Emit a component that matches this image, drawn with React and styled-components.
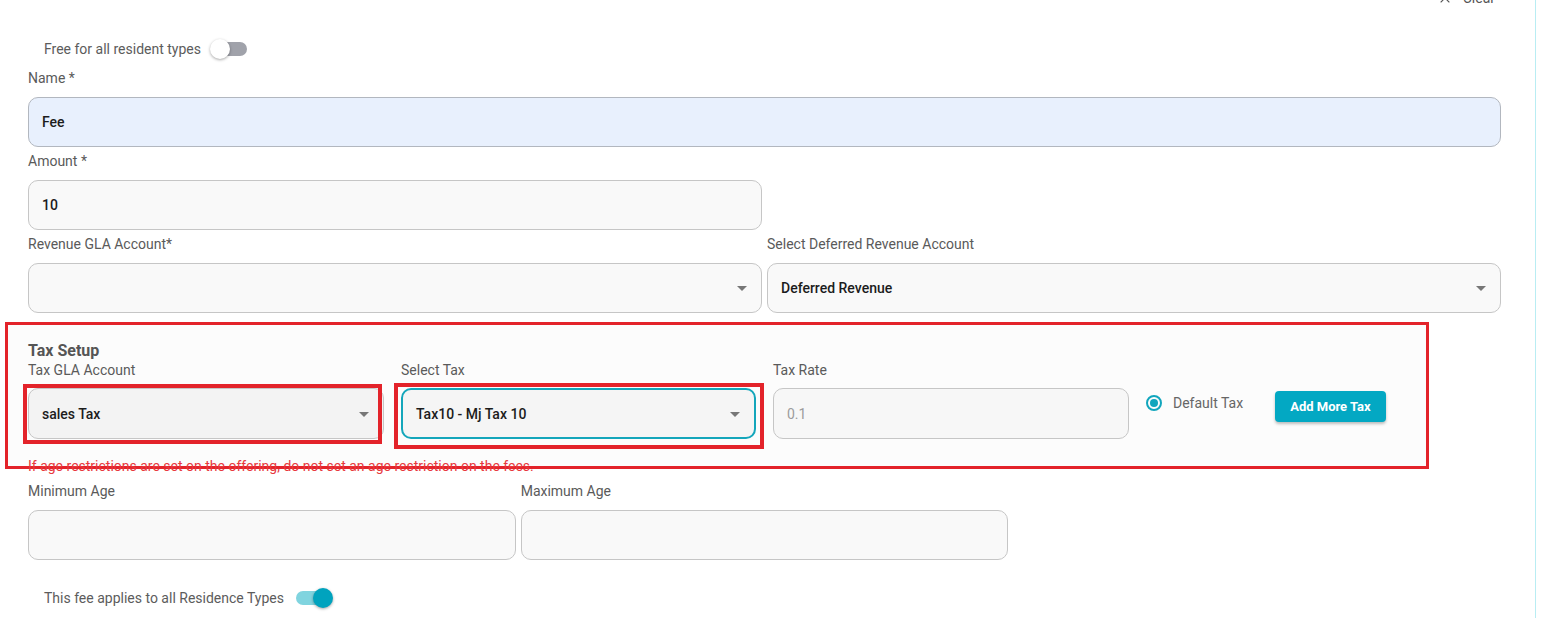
import React from "react";
import styled, { createGlobalStyle } from "styled-components";
import { X } from "lucide-react";

const GlobalStyle = createGlobalStyle`
  body {
    margin: 0;
    background: #fff;
    font-family: Roboto, "Liberation Sans", sans-serif;
    overflow: hidden;
  }
`;

const Panel = styled.div`
  width: 1536px;
  height: 630px;
  box-sizing: border-box;
  padding: 0 34px 0 28px;
  border-right: 1px solid #b9edf3;
`;

const TopBar = styled.div`
  height: 20px;
  margin: -12px 6px 0 0;
  display: flex;
  justify-content: flex-end;
  align-items: center;
`;

const ClearButton = styled.button`
  display: flex;
  align-items: center;
  gap: 10px;
  border: none;
  background: none;
  padding: 0;
  font-family: inherit;
  font-size: 14px;
  color: #555;
`;

const SwitchRow = styled.div`
  display: flex;
  align-items: center;
  height: 22px;
  padding-left: 16px;
  margin-top: ${p => p.$top || 0}px;
  margin-bottom: ${p => p.$bottom || 0}px;
  font-size: 14px;
  color: #5c5c5c;
`;

const Track = styled.span`
  position: relative;
  display: inline-block;
  width: 34px;
  height: 14px;
  border-radius: 7px;
  margin-left: ${p => p.$gap}px;
  background: ${p => (p.$on ? "#80d4df" : "#a0a2aa")};
`;

const Thumb = styled.span`
  position: absolute;
  top: -3px;
  left: ${p => (p.$on ? "17px" : "-3px")};
  width: 20px;
  height: 20px;
  border-radius: 50%;
  background: ${p => (p.$on ? "#00a3be" : "#fff")};
  box-shadow: 0 1px 3px rgba(0, 0, 0, 0.35);
`;

const Switch = ({ on, gap }) => (
  <Track $on={on} $gap={gap}>
    <Thumb $on={on} />
  </Track>
);

const Grid = styled.div`
  display: grid;
  grid-template-columns: repeat(${p => p.$cols}, 1fr);
  column-gap: 5px;
`;

const Field = styled.div`
  position: relative;
  display: flex;
  flex-direction: column;
  margin-bottom: 6px;
  width: ${p => (p.$w ? `${p.$w}px` : "auto")};
`;

const Label = styled.div`
  font-size: 14px;
  line-height: 16px;
  color: #5a5a5a;
  margin-bottom: ${p => p.$mb || 11}px;
`;

const Box = styled.div`
  position: relative;
  height: ${p => p.$h || 50}px;
  box-sizing: border-box;
  display: flex;
  align-items: center;
  padding: 0 13px;
  border-radius: 10px;
  border: ${p => (p.$focus ? "2px solid #14a6bb" : `1px solid ${p.$line || "#c6c6c6"}`)};
  background: ${p => p.$bg || "#f9f9f9"};
  font-size: 14px;
  font-weight: 500;
  color: ${p => (p.$muted ? "#9c9c9c" : "#1c1c1c")};
  ${p => p.$muted && "font-weight: 400;"}
`;

const Caret = styled.span`
  position: absolute;
  right: 14px;
  top: 50%;
  margin-top: -2px;
  width: 0;
  height: 0;
  border-left: 5px solid transparent;
  border-right: 5px solid transparent;
  border-top: 5px solid #777;
`;

const TaxSection = styled.section`
  width: 1424px;
  box-sizing: border-box;
  margin: 3px 0 0 -23px;
  padding: 16px 0 0 20px;
  border: 3px solid #e3232a;
  background: #fcfcfc;
`;

const SectionTitle = styled.div`
  font-size: 16px;
  line-height: 19px;
  font-weight: 700;
  color: #555;
  margin-bottom: 2px;
`;

const TaxRow = styled.div`
  display: flex;
  align-items: flex-start;
  gap: 17px;
`;

const Mark = styled.span`
  position: absolute;
  top: ${p => p.$t}px;
  left: ${p => p.$l}px;
  right: ${p => p.$r}px;
  bottom: ${p => p.$b}px;
  border: 4px solid #e3232a;
  pointer-events: none;
`;

const RadioWrap = styled.label`
  display: flex;
  align-items: center;
  gap: 11px;
  margin-top: 33px;
  font-size: 14px;
  color: #666;
`;

const RadioDot = styled.span`
  width: 16px;
  height: 16px;
  box-sizing: border-box;
  border-radius: 50%;
  border: 2px solid #12a6bd;
  display: flex;
  align-items: center;
  justify-content: center;
  &::after {
    content: "";
    width: 8px;
    height: 8px;
    border-radius: 50%;
    background: #12a6bd;
  }
`;

const AddButton = styled.button`
  margin: 29px 0 0 15px;
  height: 31px;
  padding: 0 15px;
  border: none;
  border-radius: 4px;
  background: #03a8c3;
  color: #fff;
  font-family: inherit;
  font-size: 13px;
  font-weight: 700;
  box-shadow: 0 2px 3px rgba(0, 0, 0, 0.25);
`;

const ErrorText = styled.div`
  font-size: 14px;
  line-height: 16px;
  color: #e8383d;
  margin: 13px 0 -8px;
`;

const AgeGrid = styled(Grid)`
  margin-top: 14px;
`;

const Select = ({ value, bg, focus, h }) => (
  <Box $bg={bg} $focus={focus} $h={h}>
    {value}
    <Caret />
  </Box>
);

const App = () => (
  <>
    <GlobalStyle />
    <Panel>
      <TopBar>
        <ClearButton>
          <X size={16} strokeWidth={1.6} color="#555" />
          Clear
        </ClearButton>
      </TopBar>

      <SwitchRow $top={30} $bottom={10}>
        Free for all resident types
        <Switch on={false} gap={12} />
      </SwitchRow>

      <Field>
        <Label>Name *</Label>
        <Box $bg="#e8f0fd" $line="#b2b7bf">Fee</Box>
      </Field>

      <Grid $cols={2}>
        <Field>
          <Label>Amount *</Label>
          <Box>10</Box>
        </Field>
      </Grid>

      <Grid $cols={2}>
        <Field>
          <Label>Revenue GLA Account*</Label>
          <Select value="" />
        </Field>
        <Field>
          <Label>Select Deferred Revenue Account</Label>
          <Select value="Deferred Revenue" />
        </Field>
      </Grid>

      <TaxSection>
        <SectionTitle>Tax Setup</SectionTitle>
        <TaxRow>
          <Field $w={356}>
            <Label $mb={10}>Tax GLA Account</Label>
            <Select value="sales Tax" bg="#f3f3f3" h={51} />
            <Mark $t={22} $l={-5} $r={2} $b={-5} />
          </Field>
          <Field $w={355}>
            <Label $mb={10}>Select Tax</Label>
            <Select value="Tax10 - Mj Tax 10" bg="#f5f5f5" focus h={51} />
            <Mark $t={21} $l={-7} $r={-8} $b={-10} />
          </Field>
          <Field $w={356}>
            <Label $mb={10}>Tax Rate</Label>
            <Box $muted $bg="#f7f7f7" $h={51}>0.1</Box>
          </Field>
          <RadioWrap>
            <RadioDot />
            Default Tax
          </RadioWrap>
          <AddButton>Add More Tax</AddButton>
        </TaxRow>
        <ErrorText>
          If age restrictions are set on the offering, do not set an age restriction on the fees.
        </ErrorText>
      </TaxSection>

      <AgeGrid $cols={3}>
        <Field>
          <Label>Minimum Age</Label>
          <Box />
        </Field>
        <Field>
          <Label>Maximum Age</Label>
          <Box />
        </Field>
      </AgeGrid>

      <SwitchRow $top={21}>
        This fee applies to all Residence Types
        <Switch on gap={12} />
      </SwitchRow>
    </Panel>
  </>
);

export default App;
